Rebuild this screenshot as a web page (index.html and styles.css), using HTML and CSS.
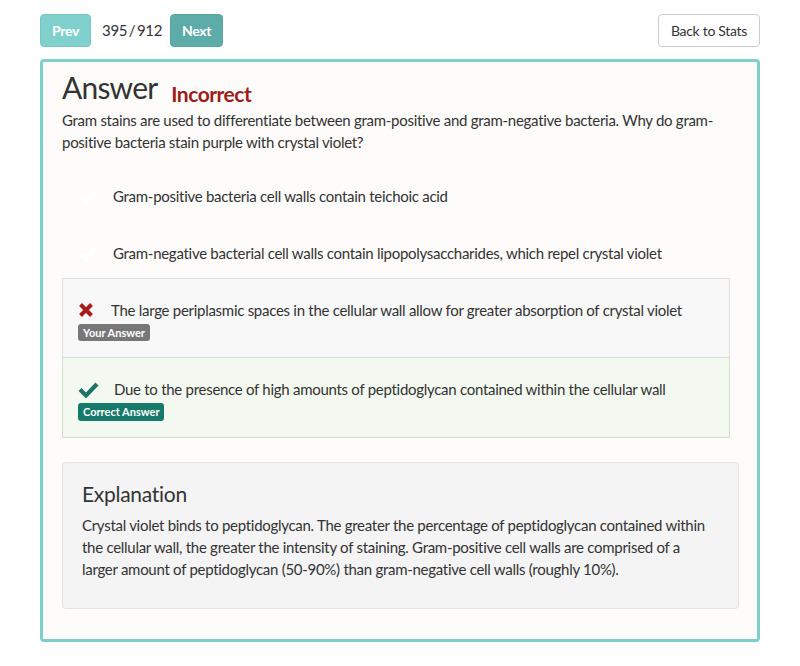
FILE: index.html
```
<!DOCTYPE html>
<html>
<head>
<meta charset="utf-8">
<link rel="stylesheet" href="styles.css">
</head>
<body>
<div class="page">
  <div class="topbar">
    <div class="nav">
      <button class="btn btn-prev">Prev</button>
      <span class="counter">395 / 912</span>
      <button class="btn btn-next">Next</button>
    </div>
    <button class="btn btn-back">Back to Stats</button>
  </div>
  <div class="card">
    <h1 class="title"><span>Answer</span><span class="status">Incorrect</span></h1>
    <p class="question">Gram stains are used to differentiate between gram-positive and gram-negative bacteria. Why do gram-positive bacteria stain purple with crystal violet?</p>
    <div class="choices">
      <div class="choice">
        <div class="choice-line">
          <span class="icon"><svg width="20" height="16" viewBox="0 0 20 16"><path d="M2 8.5 L7.5 14 L18 3" fill="none" stroke="#ffffff" stroke-width="4"/></svg></span>
          <span>Gram-positive bacteria cell walls contain teichoic acid</span>
        </div>
      </div>
      <div class="choice">
        <div class="choice-line">
          <span class="icon"><svg width="20" height="16" viewBox="0 0 20 16"><path d="M2 8.5 L7.5 14 L18 3" fill="none" stroke="#ffffff" stroke-width="4"/></svg></span>
          <span>Gram-negative bacterial cell walls contain lipopolysaccharides, which repel crystal violet</span>
        </div>
      </div>
      <div class="choice choice-wrong">
        <div class="choice-line">
          <span class="icon icon-x"><svg width="16" height="16" viewBox="0 0 16 16"><path d="M2.5 2.5 L13.5 13.5 M13.5 2.5 L2.5 13.5" fill="none" stroke="#a51d1d" stroke-width="4"/></svg></span>
          <span>The large periplasmic spaces in the cellular wall allow for greater absorption of crystal violet</span>
        </div>
        <span class="badge badge-gray">Your Answer</span>
      </div>
      <div class="choice choice-right">
        <div class="choice-line">
          <span class="icon icon-check"><svg width="21" height="17" viewBox="0 0 21 17"><path d="M2 8.5 L8 14.5 L19 3" fill="none" stroke="#1c7566" stroke-width="4.2"/></svg></span>
          <span>Due to the presence of high amounts of peptidoglycan contained within the cellular wall</span>
        </div>
        <span class="badge badge-green">Correct Answer</span>
      </div>
    </div>
    <div class="explanation">
      <h2>Explanation</h2>
      <p>Crystal violet binds to peptidoglycan. The greater the percentage of peptidoglycan contained within the cellular wall, the greater the intensity of staining. Gram-positive cell walls are comprised of a larger amount of peptidoglycan (50-90%) than gram-negative cell walls (roughly 10%).</p>
    </div>
  </div>
</div>
</body>
</html>
```
FILE: styles.css
```
* { box-sizing: border-box; }
body {
  margin: 0;
  background: #ffffff;
  font-family: Lato, "Open Sans", sans-serif;
  color: #333333;
  font-size: 15px;
  letter-spacing: -0.28px;
}
.page {
  width: 720px;
  margin: 14px 0 0 40px;
}
.topbar {
  display: flex;
  justify-content: space-between;
  align-items: center;
}
.nav {
  display: flex;
  align-items: center;
}
.btn {
  height: 33px;
  border-radius: 4px;
  font-family: inherit;
  font-size: 14px;
  letter-spacing: -0.3px;
  border: 1px solid transparent;
  padding: 0 12px;
}
.btn-prev {
  background: #80d0cd;
  border-color: #75c7c4;
  color: #fff;
  font-weight: bold;
  width: 51px;
  padding: 0;
}
.btn-next {
  background: #5eaca9;
  border-color: #58a5a2;
  color: #fff;
  font-weight: bold;
  width: 53px;
  padding: 0;
}
.counter {
  font-size: 15px;
  margin: 0 8px 0 11px;
  position: relative;
  top: -1px;
  word-spacing: -2px;
}
.btn-back {
  background: #fff;
  border-color: #cccccc;
  color: #333;
  width: 102px;
  padding: 0;
}
.card {
  margin-top: 12px;
  border: 3px solid #7dcfcc;
  border-radius: 4px;
  background: #fdfcfa;
  padding: 8px 18px 30px 19px;
}
.title {
  margin: 0;
  display: flex;
  align-items: flex-start;
  font-size: 30px;
  font-weight: normal;
  line-height: 34px;
  letter-spacing: -0.8px;
  color: #333;
}
.status {
  font-size: 21px;
  font-weight: bold;
  line-height: 20px;
  margin-top: 14px;
  letter-spacing: -0.5px;
  color: #a01b1b;
  margin-left: 14px;
}
.question {
  margin: 5px 0 11px;
  line-height: 22px;
}
.choices {
  margin-right: 9px;
}
.choice {
  border: 1px solid transparent;
  padding: 20px 15px 13px;
}
.choice-line {
  display: flex;
  align-items: center;
  line-height: 22px;
}
.icon {
  width: 22px;
  margin-right: 13px;
  display: flex;
  align-items: center;
}
.icon-x { margin-right: 11px; width: 22px; }
.icon-check { margin-right: 14px; }
.choice-wrong {
  background: #f8f8f8;
  border-color: #dddddd;
  padding-bottom: 16px;
}
.choice-right {
  background: #f3f9f0;
  border-color: #cde3c4;
  padding-bottom: 16px;
}
.choice-wrong + .choice-right { border-top: 1px solid #d2e5ca; margin-top: -1px; }
.badge {
  display: inline-block;
  margin-top: 3px;
  height: 17px;
  line-height: 17px;
  padding: 0 5px;
  border-radius: 3px;
  color: #fff;
  font-size: 11px;
  font-weight: bold;
  letter-spacing: 0;
}
.badge-gray { background: #777777; }
.badge-green { background: #167a6a; height: 18px; line-height: 18px; }
.explanation {
  margin-top: 24px;
  background: #f4f4f4;
  border: 1px solid #e3e3e3;
  border-radius: 4px;
  padding: 18px 26px 18px 19px;
}
.explanation h2 {
  margin: 0 0 7px;
  font-size: 21px;
  font-weight: normal;
  line-height: 26px;
}
.explanation p {
  margin: 0 0 10px;
  line-height: 22px;
}
```
